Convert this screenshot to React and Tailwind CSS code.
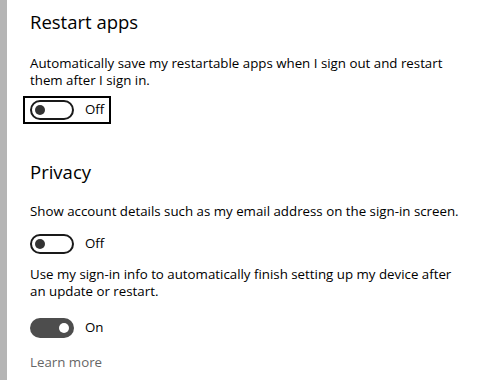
import React from "react";

const Toggle = ({ on, label, focused }) => (
  <div
    className={`inline-flex items-center gap-[11px] ${
      focused ? "border-2 border-black px-[5px] py-[2px] -ml-[7px]" : ""
    }`}
  >
    <div
      className={`w-[44px] h-[20px] rounded-full flex items-center ${
        on ? "bg-[#4d4d4d] justify-end pr-[5px]" : "border-2 border-[#1a1a1a] pl-[3px]"
      }`}
    >
      <div className={`w-[10px] h-[10px] rounded-full ${on ? "bg-white" : "bg-[#333]"}`} />
    </div>
    <span className="text-[13.3px] text-black">{label}</span>
  </div>
);

export default function App() {
  return (
    <div className="w-[498px] h-[380px] bg-white flex overflow-hidden font-['Open_Sans',sans-serif]">
      <div className="w-[7px] bg-[#b5b5b5] shrink-0" />
      <div className="pl-[23px] pr-[20px] pt-[8px] flex flex-col">
        <h2 className="text-[18.5px] leading-[28px] text-black">Restart apps</h2>
        <p className="mt-[19px] text-[13.3px] leading-[17px] text-black w-[440px]">
          Automatically save my restartable apps when I sign out and restart them after I sign in.
        </p>
        <div className="mt-[7px]">
          <Toggle label="Off" focused />
        </div>
        <h2 className="mt-[34px] text-[18.5px] leading-[28px] text-black">Privacy</h2>
        <p className="mt-[17px] text-[13.3px] leading-[17px] text-black">
          Show account details such as my email address on the sign-in screen.
        </p>
        <div className="mt-[11px]">
          <Toggle label="Off" />
        </div>
        <p className="mt-[11px] text-[13.3px] leading-[17px] text-black w-[440px]">
          Use my sign-in info to automatically finish setting up my device after an update or restart.
        </p>
        <div className="mt-[15px]">
          <Toggle on label="On" />
        </div>
        <a className="mt-[14px] text-[13.3px] text-[#666]">Learn more</a>
      </div>
    </div>
  );
}
